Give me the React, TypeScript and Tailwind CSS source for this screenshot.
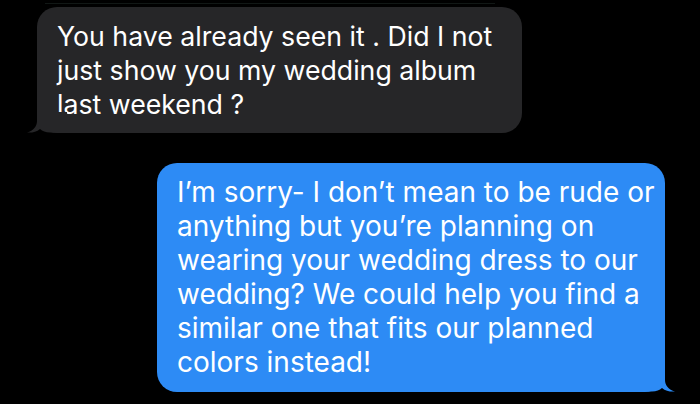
const Tail = ({ color, flip }: { color: string; flip?: boolean }) => (
	<svg
		width="40"
		height="21"
		viewBox="0 0 40 21"
		className={`absolute bottom-0 ${flip ? '-right-[10px] -scale-x-100' : '-left-[10px]'}`}
	>
		<path
			d="M10 0 L10 9 C10 14.5 6.5 18.5 0 20.5 C4.5 21 9.5 20 13 17 C15.5 19.2 18.5 20.5 23 20.5 L40 20.5 L40 0 Z"
			fill={color}
		/>
	</svg>
);

const App = () => {
	return (
		<div
			className="w-[700px] h-[404px] bg-black flex flex-col overflow-hidden text-white"
			style={{ fontFamily: 'Inter, "Liberation Sans", sans-serif' }}
		>
			{/* edge of the previous message, cut off */}
			<div className="mt-[3px] ml-[45px] w-[450px] h-[1px] bg-[#111715]" />

			{/* received */}
			<div className="relative ml-[37px] mt-[3px] w-[485px] rounded-[20px] bg-[#262628] pl-[20px] pt-[12px] pb-[12px]">
				<p className="text-[26.7px] leading-[34px] whitespace-nowrap">
					You have already seen it . Did I not
					<br />
					just show you my wedding album
					<br />
					last weekend ?
				</p>
				<Tail color="#262628" />
			</div>

			{/* sent */}
			<div className="relative self-end mr-[35px] mt-[30px] w-[508px] rounded-[20px] bg-[#2d8bf5] pl-[20px] pt-[12px] pb-[13px]">
				<p className="text-[28px] leading-[34px] whitespace-nowrap">
					I’m sorry- I don’t mean to be rude or
					<br />
					anything but you’re planning on
					<br />
					wearing your wedding dress to our
					<br />
					wedding? We could help you find a
					<br />
					similar one that fits our planned
					<br />
					colors instead!
				</p>
				<Tail color="#2d8bf5" flip />
			</div>
		</div>
	);
};

export default App;
